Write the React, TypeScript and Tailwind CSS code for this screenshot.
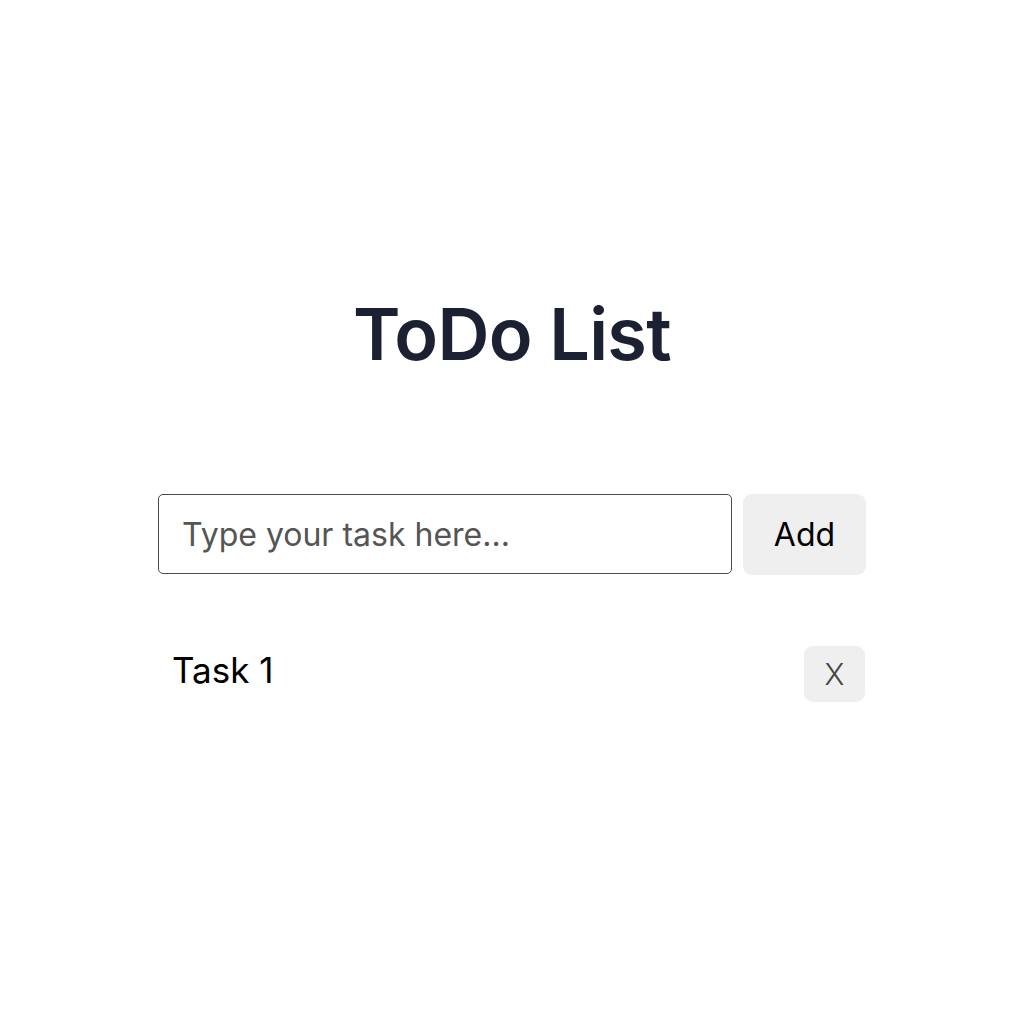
import { useState } from "react";

export default function App() {
  const [tasks, setTasks] = useState<string[]>(["Task 1"]);
  const [text, setText] = useState("");

  const add = () => {
    if (!text.trim()) return;
    setTasks([...tasks, text.trim()]);
    setText("");
  };

  return (
    <div className="flex min-h-screen w-full flex-col items-center bg-white font-['Inter',sans-serif]">
      <h1 className="mt-[298px] text-[72px] font-semibold leading-none tracking-[-0.01em] text-[#1c2033]">
        ToDo List
      </h1>

      <div className="mt-[124px] flex w-[708px] flex-col">
        <div className="flex gap-[11px]">
          <input
            value={text}
            onChange={(e) => setText(e.target.value)}
            placeholder="Type your task here..."
            className="h-[80px] flex-1 rounded-[5px] border-[1.5px] border-[#4a4a4a] px-[23px] text-[32px] text-[#222] outline-none placeholder:text-[#555]"
          />
          <button
            onClick={add}
            className="h-[81px] w-[123px] rounded-[9px] bg-[#efefef] text-[32px] text-black"
          >
            Add
          </button>
        </div>

        <ul className="mt-[69px] flex flex-col">
          {tasks.map((t, i) => (
            <li key={i} className="flex items-center justify-between pl-[14px] pr-[1px]">
              <span className="pb-[8px] text-[35px] text-black">{t}</span>
              <button
                onClick={() => setTasks(tasks.filter((_, j) => j !== i))}
                className="h-[56px] w-[61px] rounded-[9px] bg-[#efefef] text-[30px] font-light text-[#444]"
              >
                X
              </button>
            </li>
          ))}
        </ul>
      </div>
    </div>
  );
}
